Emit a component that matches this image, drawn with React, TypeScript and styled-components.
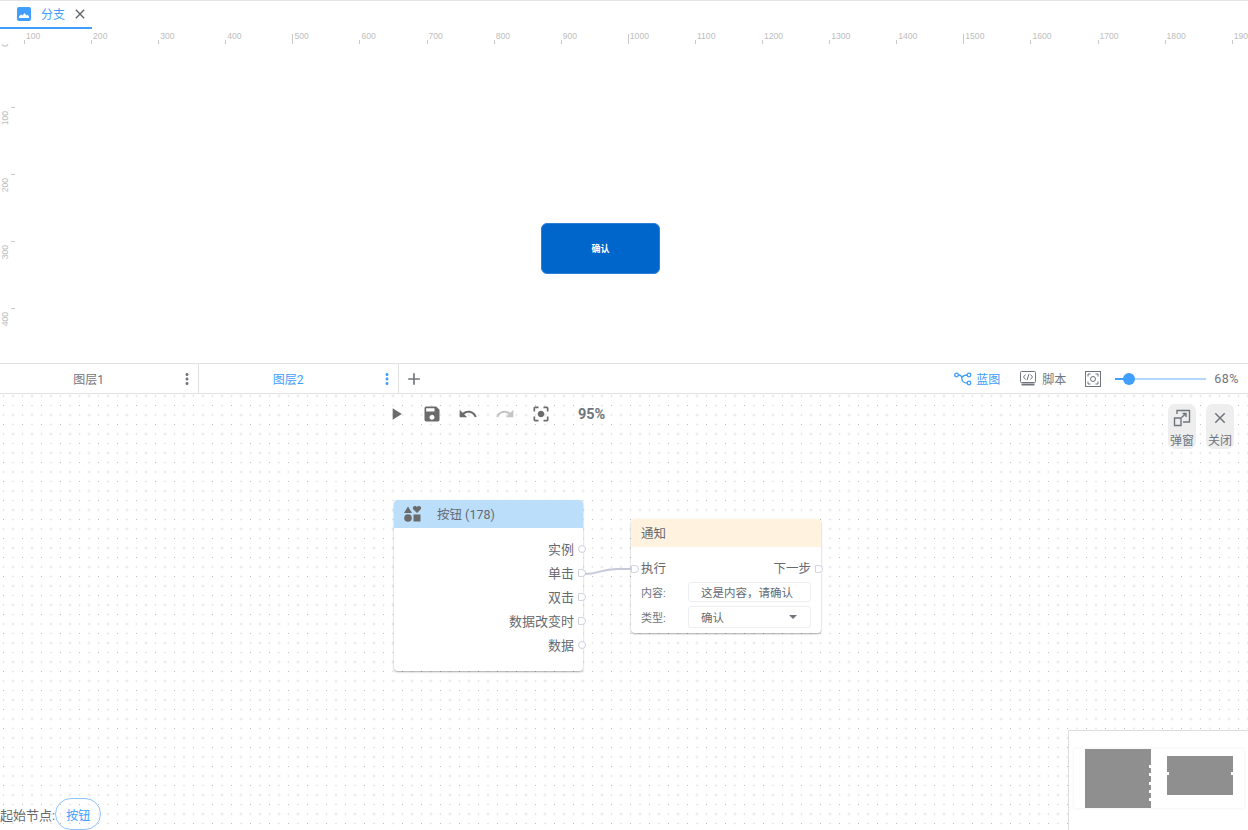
import React from "react";
import styled, { createGlobalStyle } from "styled-components";
import { MdSave, MdUndo, MdRedo, MdCenterFocusStrong, MdPlayArrow, MdAdd, MdClose, MdMoreVert } from "react-icons/md";

const Global = createGlobalStyle`
  html, body { margin: 0; padding: 0; background: #fff; }
  body { font-family: Roboto, "Noto Sans CJK SC", sans-serif; }
  * { box-sizing: border-box; }
`;

const Page = styled.div`
  width: 1248px; height: 830px; overflow: hidden;
  display: flex; flex-direction: column; background: #fff;
`;

const TabBar = styled.div`
  height: 29px; flex: none; display: flex; border-top: 1px solid #e4e4e4;
`;
const Tab = styled.div`
  width: 92px; display: flex; align-items: center; padding: 0 0 0 17px;
  border-bottom: 2px solid #409eff; color: #409eff; font-size: 12px;
`;
const TabTitle = styled.span`margin: 2px 7px 0 10px; line-height: 16px;`;

const Stage = styled.div`
  height: 334px; flex: none; position: relative; overflow: hidden;
`;
const HRuler = styled.div`
  display: flex; height: 15px; padding-left: 24px; overflow: hidden; width: 1248px;
`;
const HMark = styled.div`
  flex: none; width: 67.1px; display: flex; align-items: flex-end;
`;
const HTick = styled.i<{ $major: boolean }>`
  display: block; width: 1px; background: #c9c9c9; height: ${p => (p.$major ? 10 : 4)}px;
`;
const RulerText = styled.span`
  font: 8.6px/10px "Liberation Sans", sans-serif; color: #bdbdbd;
`;
const HLabel = styled(RulerText)`align-self: flex-start; margin: 2px 0 0 1px; white-space: nowrap;`;
const VRuler = styled.div`
  position: absolute; left: 0; top: 15px; width: 16px; height: 319px; overflow: hidden;
`;
const VMark = styled.div`
  height: 67px; display: flex; flex-direction: row-reverse; justify-content: flex-start; align-items: flex-start;
  padding-left: 1px; width: 15px;
`;
const VTick = styled.i`display: block; width: 4px; height: 1px; background: #c9c9c9; flex: none;`;
const VLabel = styled(RulerText)<{ $top: number }>`
  writing-mode: vertical-rl; transform: rotate(180deg); margin: ${p => p.$top}px 1px 0 0;
`;
const ConfirmButton = styled.button`
  position: absolute; left: 541px; top: 194px; width: 119px; height: 51px;
  background: #0066cc; border: 1px solid #2b7fd6; border-radius: 6px; color: #fff;
  font: 700 9px "Noto Sans CJK SC", sans-serif; padding: 0;
`;

const LayerBar = styled.div`
  height: 31px; flex: none; display: flex; align-items: stretch;
  border-top: 1px solid #e2e2e2; border-bottom: 1px solid #e2e2e2;
`;
const Layer = styled.div<{ $active?: boolean }>`
  width: ${p => (p.$active ? 200 : 199)}px; display: flex; align-items: center; position: relative;
  justify-content: center; padding-right: 21px; border-right: 1px solid #e2e2e2;
  font-size: 12px; color: ${p => (p.$active ? "#409eff" : "#70757d")};
`;
const Kebab = styled.span`
  position: absolute; right: 2px; top: 6px; display: flex;
`;
const AddBtn = styled.span`display: flex; margin-left: 5px; align-items: center; color: #70757d;`;
const BarTools = styled.div`
  margin-left: auto; display: flex; align-items: center; padding-right: 9px; font-size: 12px; color: #70757d;
`;
const ToolItem = styled.span<{ $active?: boolean; $gap: number; $after: number }>`
  display: flex; align-items: center; gap: ${p => p.$gap}px; margin-right: ${p => p.$after}px;
  color: ${p => (p.$active ? "#409eff" : "#70757d")};
`;
const FitIcon = styled.span`display: flex; margin-right: 14px;`;
const Slider = styled.div`
  width: 91px; height: 2px; background: #b3d8ff; position: relative; margin-right: 8px;
  &::before { content: ""; position: absolute; left: 0; top: 0; height: 2px; width: 14px; background: #409eff; }
  &::after { content: ""; position: absolute; left: 8px; top: -5px; width: 12px; height: 12px; border-radius: 50%; background: #409eff; }
`;
const Percent = styled.span`font-size: 12.5px; letter-spacing: .5px;`;

const Blueprint = styled.div`
  flex: 1; position: relative; overflow: hidden;
  background-color: #fff;
  background-image:
    radial-gradient(circle, #e6e6e6 1px, transparent 1.3px),
    radial-gradient(circle, #dcdcdc 0.8px, transparent 1.1px),
    radial-gradient(circle, #dcdcdc 0.8px, transparent 1.1px),
    radial-gradient(circle, #bcbcbc 0.6px, transparent 0.9px);
  background-size: 19px 19px;
  background-position: 3.5px -7.5px, 13px -7.5px, 3.5px 2px, 13px 2px;
`;
const Toolbar = styled.div`
  position: absolute; left: 386px; top: 10px; display: flex; align-items: center; gap: 16.2px; color: #6b6b6b;
`;
const Zoom = styled.span`font-size: 14.5px; font-weight: 700; color: #70757d; margin-left: 11px;`;
const ToolIcon = styled.span<{ $off?: boolean }>`display: flex; color: ${p => (p.$off ? "#c4c4c4" : "#6b6b6b")};`;
const SideActions = styled.div`
  position: absolute; right: 14px; top: 10px; display: flex; gap: 10px;
`;
const SideAction = styled.div`
  width: 28px; height: 45px; border-radius: 7px; background: #eeeeee; display: flex; flex-direction: column;
  align-items: center; color: #70757d; font-size: 12px; line-height: 16px; padding-top: 5px; gap: 6px; white-space: nowrap;
`;

const Node = styled.div<{ $x: number; $y: number; $w: number; $h: number }>`
  position: absolute; left: ${p => p.$x}px; top: ${p => p.$y}px; width: ${p => p.$w}px; height: ${p => p.$h}px;
  background: #fff; border-radius: 4px; box-shadow: 0 1px 2px rgba(0,0,0,.35);
`;
const NodeHead = styled.div<{ $bg: string }>`
  height: 28px; background: ${p => p.$bg}; border-radius: 4px 4px 0 0; display: flex; align-items: center;
  padding: 0 0 1px 10px; font-size: 12.5px; color: #666a70;
`;
const HeadTitle = styled.span`margin-left: 15px;`;
const Ports = styled.div`
  display: flex; flex-direction: column; align-items: flex-end; padding: 9px 9px 0 0;
`;
const PortRow = styled.div`
  height: 24px; display: flex; align-items: center; position: relative; font-size: 13px; color: #666a70; padding-bottom: 1px;
`;
const Pin = styled.span<{ $round?: boolean }>`
  position: absolute; top: 8px; width: 8px; height: 8px; background: #fff;
  border: 1px solid #cfd2e0; border-radius: ${p => (p.$round ? "50%" : "1px 4px 4px 1px")};
`;
const OutPin = styled(Pin)`right: -12px;`;
const NotifyBody = styled.div`padding: 9px 10px 0; display: flex; flex-direction: column;`;
const ExecRow = styled(PortRow)`justify-content: space-between; font-size: 12.5px;`;
const ExecIn = styled.span`position: relative; margin-left: -10px; padding-left: 10px;`;
const ExecOut = styled.span`position: relative;`;
const ExecOutPin = styled(Pin)`right: -12px; top: 7px;`;
const ExecInPin = styled(Pin)`left: 0; top: 7px;`;
const FieldRow = styled.div`
  display: flex; align-items: center; height: 25px; font-size: 11px; color: #70757d; margin-top: -1px; margin-bottom: 1px;
`;
const FieldLabel = styled.span`width: 47px; flex: none;`;
const Field = styled.div<{ $h: number }>`
  width: 123px; height: ${p => p.$h}px; border: 1px solid #eceef2; border-radius: 3px; display: flex; align-items: center;
  padding: 0 13px 0 12px; font-size: 11.5px; color: #666a70; justify-content: space-between; white-space: nowrap;
`;
const Caret = styled.i`
  width: 0; height: 0; border-left: 4px solid transparent; border-right: 4px solid transparent; border-top: 4px solid #70757d;
`;
const Wire = styled.svg`position: absolute; left: 0; top: 0; pointer-events: none;`;

const StartRow = styled.div`
  position: absolute; left: 0; top: 404px; display: flex; align-items: center; font-size: 13px; color: #666a70;
`;
const Pill = styled.span`
  width: 46px; height: 32px; border: 1px solid #90c5ff; border-radius: 16px; color: #409eff; font-size: 12px;
  display: flex; align-items: center; justify-content: center;
`;
const Minimap = styled.div`
  position: absolute; right: 0; bottom: 0; width: 180px; height: 100px; background: #fff;
  border-left: 1px solid #dedede; border-top: 1px solid #dedede;
`;
const MiniPanel = styled.div`
  position: absolute; left: 5px; top: 18px; width: 170px; height: 59px; background: #fff;
  box-shadow: 0 0 3px rgba(0,0,0,.08);
`;
const MiniNode = styled.div<{ $x: number; $y: number; $w: number; $h: number }>`
  position: absolute; left: ${p => p.$x}px; top: ${p => p.$y}px; width: ${p => p.$w}px; height: ${p => p.$h}px; background: #8f8f8f;
`;
const MiniDot = styled.i<{ $x: number; $y: number }>`
  position: absolute; left: ${p => p.$x}px; top: ${p => p.$y}px; width: 3px; height: 3px; background: #fff;
`;

const ImageIcon = () => (
  <svg width="14" height="14" viewBox="0 0 14 14">
    <rect width="14" height="14" rx="2" fill="#409eff" />
    <path d="M2 11 L2 9.5 L4 7.5 L5.5 8.5 L7.5 6 L9.5 8.5 L10.5 7.5 L12 9.5 L12 11 Z" fill="#fff" />
  </svg>
);
const BlueprintIcon = () => (
  <svg width="18" height="14" viewBox="0 0 18 14" fill="none" stroke="#409eff" strokeWidth="1.3">
    <circle cx="2.5" cy="3" r="1.8" /><circle cx="15" cy="3" r="1.8" /><circle cx="15" cy="11" r="1.8" />
    <path d="M4.3 3 C7 3 7.5 4 8 7.5 C8.4 10 10 11 13.2 11 M8 5.5 C9 3.8 10.5 3 13.2 3" />
  </svg>
);
const ScriptIcon = () => (
  <svg width="16" height="15" viewBox="0 0 16 15" fill="none" stroke="#70757d">
    <rect x="0.5" y="0.5" width="15" height="11" rx="1" />
    <path d="M1.5 13.5 H14.5" strokeWidth="2" />
    <path d="M5.5 3.5 L3.5 6 L5.5 8.5 M10.5 3.5 L12.5 6 L10.5 8.5 M9 3 L7 9" strokeWidth="1" />
  </svg>
);
const FitScreenIcon = () => (
  <svg width="16" height="16" viewBox="0 0 16 16" fill="none" stroke="#70757d">
    <rect x="0.5" y="0.5" width="15" height="15" />
    <path d="M3 5.5 V3 H5.5 M10.5 3 H13 V5.5 M13 10.5 V13 H10.5 M5.5 13 H3 V10.5" />
    <circle cx="8" cy="8" r="2.5" />
  </svg>
);
const PopupIcon = () => (
  <svg width="18" height="18" viewBox="0 0 18 18" fill="none" stroke="#70757d" strokeWidth="1.4">
    <path d="M4 5 V1.5 H16.5 V13 H10" />
    <path d="M1.5 9 H8 V16.5 H1.5 Z" />
    <path d="M8.5 8.5 L13 4.5 M9.5 4.5 H13 V8" />
  </svg>
);
const ShapesIcon = () => (
  <svg width="18" height="16" viewBox="0 0 18 16" fill="#6b6b6b">
    <path d="M4 0.5 L8 7 H0 Z" />
    <path d="M13 7 L9.5 3.5 C8 1.5 9.5 0 11 0 C12 0 12.7 .6 13 1.2 C13.3 .6 14 0 15 0 C16.5 0 18 1.5 16.5 3.5 Z" />
    <circle cx="4" cy="12" r="3.8" />
    <rect x="9.5" y="8.5" width="7" height="7" />
  </svg>
);

const hMarks = Array.from({ length: 19 }, (_, i) => (i + 1) * 100);
const vMarks = [0, 100, 200, 300, 400];

export default function App() {
  return (
    <Page>
      <Global />
      <TabBar>
        <Tab>
          <ImageIcon />
          <TabTitle>分支</TabTitle>
          <MdClose size={16} color="#5f6368" />
        </Tab>
      </TabBar>
      <Stage>
        <HRuler>
          {hMarks.map(m => (
            <HMark key={m}>
              <HTick $major={m % 500 === 0} />
              <HLabel>{m}</HLabel>
            </HMark>
          ))}
        </HRuler>
        <VRuler>
          {vMarks.map((m, i) => (
            <VMark key={m} style={i === 0 ? { marginTop: -4 } : undefined}>
              <VTick />
              <VLabel $top={m === 0 ? 2 : 4}>{m}</VLabel>
            </VMark>
          ))}
        </VRuler>
        <ConfirmButton>确认</ConfirmButton>
      </Stage>
      <LayerBar>
        <Layer>图层1<Kebab><MdMoreVert size={18} /></Kebab></Layer>
        <Layer $active>图层2<Kebab><MdMoreVert size={18} /></Kebab></Layer>
        <AddBtn><MdAdd size={20} /></AddBtn>
        <BarTools>
          <ToolItem $active $gap={4} $after={20}><BlueprintIcon />蓝图</ToolItem>
          <ToolItem $gap={6} $after={19}><ScriptIcon />脚本</ToolItem>
          <FitIcon><FitScreenIcon /></FitIcon>
          <Slider />
          <Percent>68%</Percent>
        </BarTools>
      </LayerBar>
      <Blueprint>
        <Toolbar>
          <ToolIcon><MdPlayArrow size={20} /></ToolIcon>
          <ToolIcon><MdSave size={20} /></ToolIcon>
          <ToolIcon><MdUndo size={20} /></ToolIcon>
          <ToolIcon $off><MdRedo size={20} /></ToolIcon>
          <ToolIcon><MdCenterFocusStrong size={20} /></ToolIcon>
          <Zoom>95%</Zoom>
        </Toolbar>
        <SideActions>
          <SideAction><PopupIcon />弹窗</SideAction>
          <SideAction><MdClose size={18} />关闭</SideAction>
        </SideActions>
        <Node $x={394} $y={106} $w={189} $h={171}>
          <NodeHead $bg="#bbdefb"><ShapesIcon /><HeadTitle>按钮 (178)</HeadTitle></NodeHead>
          <Ports>
            <PortRow>实例<OutPin $round /></PortRow>
            <PortRow>单击<OutPin /></PortRow>
            <PortRow>双击<OutPin /></PortRow>
            <PortRow>数据改变时<OutPin /></PortRow>
            <PortRow>数据<OutPin $round /></PortRow>
          </Ports>
        </Node>
        <Node $x={631} $y={125} $w={190} $h={114}>
          <NodeHead $bg="#fff3e0">通知</NodeHead>
          <NotifyBody>
            <ExecRow>
              <ExecIn>执行<ExecInPin /></ExecIn>
              <ExecOut>下一步<ExecOutPin /></ExecOut>
            </ExecRow>
            <FieldRow><FieldLabel>内容:</FieldLabel><Field $h={20}>这是内容，请确认</Field></FieldRow>
            <FieldRow><FieldLabel>类型:</FieldLabel><Field $h={22}>确认<Caret /></Field></FieldRow>
          </NotifyBody>
        </Node>
        <Wire width="1248" height="436">
          <path d="M585 180 C600 180 600 175 617 175 L631 175" fill="none" stroke="#c5c8d8" strokeWidth="2" />
        </Wire>
        <StartRow>起始节点:<Pill>按钮</Pill></StartRow>
        <Minimap>
          <MiniPanel>
            <MiniNode $x={11} $y={0} $w={66} $h={59} />
            <MiniNode $x={93} $y={7} $w={66} $h={39} />
            <MiniDot $x={75} $y={16} /><MiniDot $x={75} $y={24} /><MiniDot $x={75} $y={33} />
            <MiniDot $x={75} $y={41} /><MiniDot $x={75} $y={49} />
            <MiniDot $x={92} $y={23} /><MiniDot $x={157} $y={23} />
          </MiniPanel>
        </Minimap>
      </Blueprint>
    </Page>
  );
}
